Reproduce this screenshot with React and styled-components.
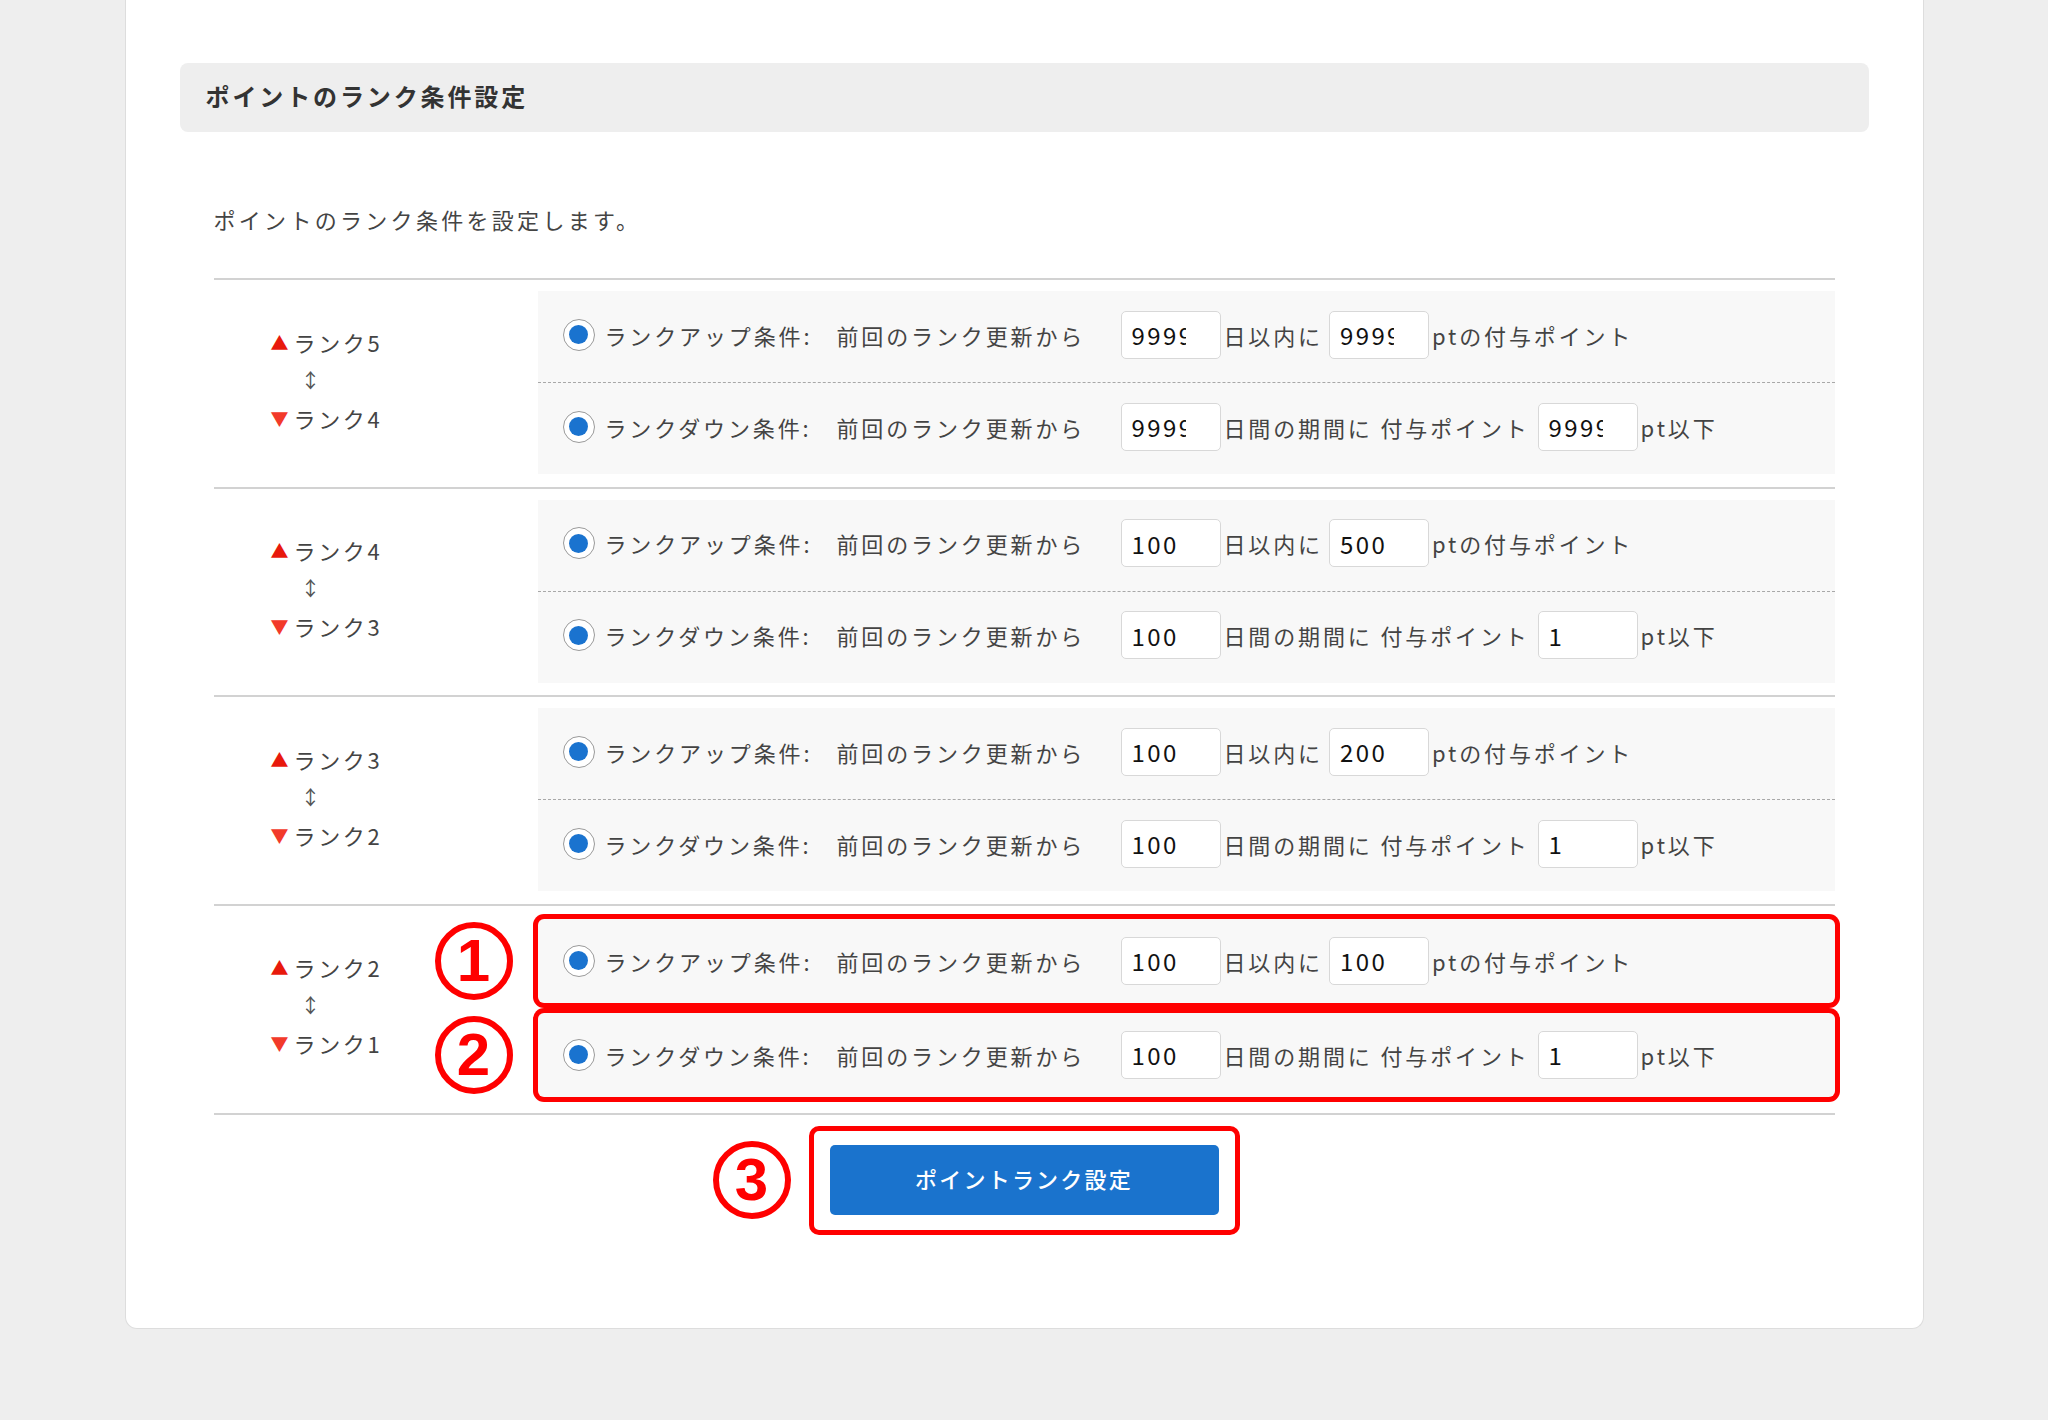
import React from "react";
import styled, { createGlobalStyle } from "styled-components";

const GlobalStyle = createGlobalStyle`
  body {
    margin: 0;
    background: #eeeeee;
    font-family: "Noto Sans CJK JP", "Noto Sans", sans-serif;
    color: #444;
  }
`;

const ranks = [
  { up: 5, down: 4, upDays: "9999", upPt: "9999", downDays: "9999", downPt: "9999" },
  { up: 4, down: 3, upDays: "100", upPt: "500", downDays: "100", downPt: "1" },
  { up: 3, down: 2, upDays: "100", upPt: "200", downDays: "100", downPt: "1" },
  { up: 2, down: 1, upDays: "100", upPt: "100", downDays: "100", downPt: "1", marked: true },
];

const Card = styled.div`
  width: 1799px;
  margin: 0 auto;
  box-sizing: border-box;
  background: #fff;
  border: 1px solid #dddddd;
  border-top: none;
  border-radius: 0 0 12px 12px;
  padding: 63px 54px 93px;
`;

const HeadBar = styled.div`
  height: 69px;
  box-sizing: border-box;
  background: #eeeeee;
  border-radius: 8px;
  display: flex;
  align-items: center;
  padding: 0 0 4px 26px;
  font-size: 24px;
  font-weight: 700;
  letter-spacing: 0.12em;
  color: #333;
`;

const Content = styled.div`
  padding: 0 34px;
`;

const Lead = styled.p`
  margin: 71px 0 43px;
  font-size: 22px;
  line-height: 32px;
  letter-spacing: 0.15em;
  color: #444;
`;

const Group = styled.div`
  display: grid;
  grid-template-columns: 324px 1fr;
  border-top: 2px solid #d2d2d2;
  padding: ${(p) => (p.$marked ? "13px 0 16px" : "11px 0 12.5px")};
  &:last-child {
    border-bottom: 2px solid #d2d2d2;
  }
`;

const RankCol = styled.div`
  display: flex;
  flex-direction: column;
  justify-content: center;
  padding: 0 0 6px 57px;
`;

const RankLine = styled.div`
  font-size: 22px;
  line-height: 38px;
  letter-spacing: 0.12em;
  color: #444;
`;

const Tri = styled.span`
  color: ${(p) => (p.$down ? "#f23a2a" : "#e8190c")};
  font-size: 18px;
  margin-right: 5px;
  letter-spacing: 0;
  vertical-align: 2px;
`;

const Swap = styled.div`
  font-size: 20px;
  line-height: 38px;
  color: #555;
  padding-left: 30px;
`;

const CondBox = styled.div`
  display: flex;
  flex-direction: column;
  gap: ${(p) => (p.$marked ? "10px" : "0")};
  background: ${(p) => (p.$marked ? "transparent" : "#f8f8f8")};
`;

const Row = styled.div`
  position: relative;
  height: ${(p) => (p.$marked ? "84px" : "91px")};
  box-sizing: border-box;
  display: flex;
  align-items: center;
  padding: 0 0 ${(p) => (p.$marked ? "0" : "4px")} 25px;
  background: #f8f8f8;
  font-size: 22px;
  letter-spacing: 0.13em;
  color: #444;
  white-space: nowrap;
  border-radius: ${(p) => (p.$marked ? "6px" : "0")};
  box-shadow: ${(p) => (p.$marked ? "0 0 0 5px #ff0000" : "none")};
`;

const Divider = styled.div`
  border-top: 1px dashed #a8a8a8;
  height: 0;
`;

const Radio = styled.span`
  width: 32px;
  height: 32px;
  box-sizing: border-box;
  border-radius: 50%;
  border: 1.5px solid #9a9a9a;
  background: #fff;
  display: flex;
  align-items: center;
  justify-content: center;
  margin-right: 10px;
  flex-shrink: 0;
  &::after {
    content: "";
    width: 19px;
    height: 19px;
    border-radius: 50%;
    background: #1a73cf;
  }
`;

const CondLabel = styled.span`
  width: 232px;
`;

const FromText = styled.span`
  width: 284px;
`;

const Field = styled.input`
  width: 100px;
  height: 48px;
  box-sizing: border-box;
  border: 1px solid #d8d8d8;
  border-radius: 5px;
  background: #fff;
  padding: 0 34px 0 10px;
  font-family: "Noto Sans CJK JP", "Noto Sans", sans-serif;
  font-size: 24px;
  letter-spacing: 0.1em;
  color: #111;
  margin-right: 3px;
  outline: none;
`;

const Unit = styled.span`
  margin-right: ${(p) => p.$gap || "0"};
`;

const Num = styled.span`
  position: absolute;
  left: -103px;
  top: 50%;
  transform: translateY(-50%);
  width: 78px;
  height: 78px;
  box-sizing: border-box;
  border: 6px solid #ff0000;
  border-radius: 50%;
  display: flex;
  align-items: center;
  justify-content: center;
  color: #ff0000;
  font-family: "Liberation Sans", Arial, sans-serif;
  font-weight: 700;
  font-size: 60px;
  letter-spacing: 0;
  line-height: 1;
`;

const Footer = styled.div`
  display: flex;
  justify-content: center;
  margin-top: 11px;
`;

const Marker = styled.div`
  position: relative;
  border: 5px solid #ff0000;
  border-radius: 10px;
  padding: 14px 16px 15px;
`;

const SubmitButton = styled.button`
  width: 389px;
  height: 70px;
  border: none;
  border-radius: 5px;
  background: #1a73cd;
  color: #fff;
  font-family: "Noto Sans CJK JP", "Noto Sans", sans-serif;
  font-size: 22px;
  font-weight: 500;
  letter-spacing: 0.1em;
  padding-bottom: 4px;
  cursor: pointer;
`;

const ButtonNum = styled(Num)`
  left: -101px;
`;

const ConditionRow = ({ type, days, pt, marked, num }) => (
  <Row $marked={marked}>
    {marked && <Num>{num}</Num>}
    <Radio />
    <CondLabel>{type === "up" ? "ランクアップ条件:" : "ランクダウン条件:"}</CondLabel>
    <FromText>前回のランク更新から</FromText>
    <Field defaultValue={days} />
    {type === "up" ? (
      <>
        <Unit $gap="6px">日以内に</Unit>
        <Field defaultValue={pt} />
        <Unit>ptの付与ポイント</Unit>
      </>
    ) : (
      <>
        <Unit $gap="8px">日間の期間に 付与ポイント</Unit>
        <Field defaultValue={pt} />
        <Unit>pt以下</Unit>
      </>
    )}
  </Row>
);

export default function App() {
  return (
    <>
      <GlobalStyle />
      <Card>
        <HeadBar>ポイントのランク条件設定</HeadBar>
        <Content>
          <Lead>ポイントのランク条件を設定します。</Lead>
          <div>
            {ranks.map((r) => (
              <Group key={r.up} $marked={r.marked}>
                <RankCol>
                  <RankLine>
                    <Tri>▲</Tri>ランク{r.up}
                  </RankLine>
                  <Swap>↕</Swap>
                  <RankLine>
                    <Tri $down>▼</Tri>ランク{r.down}
                  </RankLine>
                </RankCol>
                <CondBox $marked={r.marked}>
                  <ConditionRow type="up" days={r.upDays} pt={r.upPt} marked={r.marked} num="1" />
                  {!r.marked && <Divider />}
                  <ConditionRow type="down" days={r.downDays} pt={r.downPt} marked={r.marked} num="2" />
                </CondBox>
              </Group>
            ))}
          </div>
          <Footer>
            <Marker>
              <ButtonNum>3</ButtonNum>
              <SubmitButton>ポイントランク設定</SubmitButton>
            </Marker>
          </Footer>
        </Content>
      </Card>
    </>
  );
}
